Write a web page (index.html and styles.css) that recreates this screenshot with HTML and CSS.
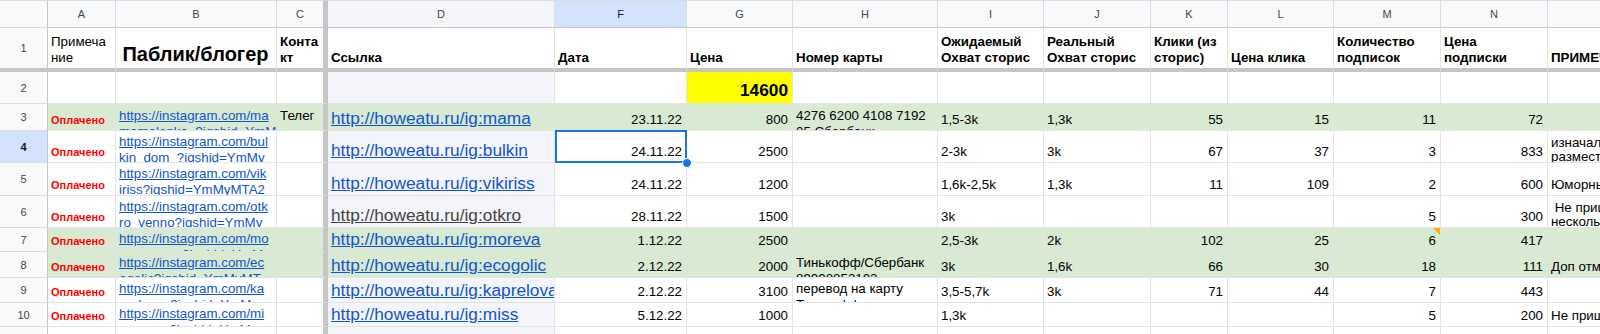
FILE: index.html
```html
<!DOCTYPE html>
<html>
<head>
  <title>Публикации</title>
  <link rel="stylesheet" href="styles.css">
</head>
<body>
  <div class="sheet">
    <div class="row head">
      <div class="rh corner"></div>
      <div class="cell a">A</div>
      <div class="cell b">B</div>
      <div class="cell c">C</div>
      <div class="cell d">D</div>
      <div class="cell f active">F</div>
      <div class="cell g">G</div>
      <div class="cell h">H</div>
      <div class="cell i">I</div>
      <div class="cell j">J</div>
      <div class="cell k">K</div>
      <div class="cell l">L</div>
      <div class="cell m">M</div>
      <div class="cell n">N</div>
      <div class="cell o"></div>
    </div>

    <div class="row row-1 titles">
      <div class="rh">1</div>
      <div class="cell a plain">Примеча<br>ние</div>
      <div class="cell b big">Паблик/блогер</div>
      <div class="cell c tight">Конта<br>кт</div>
      <div class="cell d">Ссылка</div>
      <div class="cell f">Дата</div>
      <div class="cell g">Цена</div>
      <div class="cell h">Номер карты</div>
      <div class="cell i">Ожидаемый<br>Охват сторис</div>
      <div class="cell j">Реальный<br>Охват сторис</div>
      <div class="cell k">Клики (из<br>сторис)</div>
      <div class="cell l">Цена клика</div>
      <div class="cell m">Количество<br>подписок</div>
      <div class="cell n">Цена<br>подписки</div>
      <div class="cell o">ПРИМЕЧАНИЕ</div>
    </div>

    <div class="row row-2">
      <div class="rh">2</div>
      <div class="cell a"></div>
      <div class="cell b"></div>
      <div class="cell c"></div>
      <div class="cell d"></div>
      <div class="cell f"></div>
      <div class="cell g num total">14600</div>
      <div class="cell h"></div>
      <div class="cell i"></div>
      <div class="cell j"></div>
      <div class="cell k"></div>
      <div class="cell l"></div>
      <div class="cell m"></div>
      <div class="cell n"></div>
      <div class="cell o"></div>
    </div>

    <div class="row row-3 green">
      <div class="rh">3</div>
      <div class="cell a status">Оплачено</div>
      <div class="cell b top low"><span class="ig">https://instagram.com/ma<br>mamalenka_?igshid=YmMy</span></div>
      <div class="cell c top low">Телег</div>
      <div class="cell d"><span class="site">http://howeatu.ru/ig:mama</span></div>
      <div class="cell f num">23.11.22</div>
      <div class="cell g num">800</div>
      <div class="cell h top low">4276 6200 4108 7192<br>05 Сбербанк</div>
      <div class="cell i">1,5-3k</div>
      <div class="cell j">1,3k</div>
      <div class="cell k num">55</div>
      <div class="cell l num">15</div>
      <div class="cell m num">11</div>
      <div class="cell n num">72</div>
      <div class="cell o"></div>
    </div>

    <div class="row row-4">
      <div class="rh active">4</div>
      <div class="cell a status">Оплачено</div>
      <div class="cell b top"><span class="ig">https://instagram.com/bul<br>kin_dom_?igshid=YmMy</span></div>
      <div class="cell c"></div>
      <div class="cell d"><span class="site">http://howeatu.ru/ig:bulkin</span></div>
      <div class="cell f num sel">24.11.22</div>
      <div class="cell g num">2500</div>
      <div class="cell h"></div>
      <div class="cell i">2-3k</div>
      <div class="cell j">3k</div>
      <div class="cell k num">67</div>
      <div class="cell l num">37</div>
      <div class="cell m num">3</div>
      <div class="cell n num">833</div>
      <div class="cell o top note-text">изначально<br>разместить</div>
    </div>

    <div class="row row-5">
      <div class="rh">5</div>
      <div class="cell a status">Оплачено</div>
      <div class="cell b top"><span class="ig">https://instagram.com/vik<br>iriss?igshid=YmMyMTA2</span></div>
      <div class="cell c"></div>
      <div class="cell d"><span class="site">http://howeatu.ru/ig:vikiriss</span></div>
      <div class="cell f num">24.11.22</div>
      <div class="cell g num">1200</div>
      <div class="cell h"></div>
      <div class="cell i">1,6k-2,5k</div>
      <div class="cell j">1,3k</div>
      <div class="cell k num">11</div>
      <div class="cell l num">109</div>
      <div class="cell m num">2</div>
      <div class="cell n num">600</div>
      <div class="cell o">Юморные сторис</div>
    </div>

    <div class="row row-6">
      <div class="rh">6</div>
      <div class="cell a status">Оплачено</div>
      <div class="cell b top"><span class="ig">https://instagram.com/otk<br>ro_venno?igshid=YmMy</span></div>
      <div class="cell c"></div>
      <div class="cell d"><span class="site grey">http://howeatu.ru/ig:otkro</span></div>
      <div class="cell f num">28.11.22</div>
      <div class="cell g num">1500</div>
      <div class="cell h"></div>
      <div class="cell i">3k</div>
      <div class="cell j"></div>
      <div class="cell k num"></div>
      <div class="cell l num"></div>
      <div class="cell m num">5</div>
      <div class="cell n num">300</div>
      <div class="cell o top note-text">&nbsp;Не пришла<br>несколько</div>
    </div>

    <div class="row row-7 green">
      <div class="rh">7</div>
      <div class="cell a status">Оплачено</div>
      <div class="cell b top"><span class="ig">https://instagram.com/mo<br>reva_anna?igshid=YmMy</span></div>
      <div class="cell c"></div>
      <div class="cell d"><span class="site">http://howeatu.ru/ig:moreva</span></div>
      <div class="cell f num">1.12.22</div>
      <div class="cell g num">2500</div>
      <div class="cell h"></div>
      <div class="cell i">2,5-3k</div>
      <div class="cell j">2k</div>
      <div class="cell k num">102</div>
      <div class="cell l num">25</div>
      <div class="cell m num comment">6</div>
      <div class="cell n num">417</div>
      <div class="cell o"></div>
    </div>

    <div class="row row-8 green">
      <div class="rh">8</div>
      <div class="cell a status">Оплачено</div>
      <div class="cell b top"><span class="ig">https://instagram.com/ec<br>ogolic?igshid=YmMyMT</span></div>
      <div class="cell c"></div>
      <div class="cell d"><span class="site">http://howeatu.ru/ig:ecogolic</span></div>
      <div class="cell f num">2.12.22</div>
      <div class="cell g num">2000</div>
      <div class="cell h top">Тинькофф/Сбербанк<br>89998853102</div>
      <div class="cell i">3k</div>
      <div class="cell j">1,6k</div>
      <div class="cell k num">66</div>
      <div class="cell l num">30</div>
      <div class="cell m num">18</div>
      <div class="cell n num">111</div>
      <div class="cell o">Доп отметка</div>
    </div>

    <div class="row row-9">
      <div class="rh">9</div>
      <div class="cell a status">Оплачено</div>
      <div class="cell b top"><span class="ig">https://instagram.com/ka<br>prelova_?igshid=YmMy</span></div>
      <div class="cell c"></div>
      <div class="cell d"><span class="site">http://howeatu.ru/ig:kaprelova</span></div>
      <div class="cell f num">2.12.22</div>
      <div class="cell g num">3100</div>
      <div class="cell h top">перевод на карту<br>Тинькофф</div>
      <div class="cell i">3,5-5,7k</div>
      <div class="cell j">3k</div>
      <div class="cell k num">71</div>
      <div class="cell l num">44</div>
      <div class="cell m num">7</div>
      <div class="cell n num">443</div>
      <div class="cell o"></div>
    </div>

    <div class="row row-10">
      <div class="rh">10</div>
      <div class="cell a status">Оплачено</div>
      <div class="cell b top"><span class="ig">https://instagram.com/mi<br>ss_anna?igshid=YmMy</span></div>
      <div class="cell c"></div>
      <div class="cell d"><span class="site">http://howeatu.ru/ig:miss</span></div>
      <div class="cell f num">5.12.22</div>
      <div class="cell g num">1000</div>
      <div class="cell h"></div>
      <div class="cell i">1,3k</div>
      <div class="cell j"></div>
      <div class="cell k num"></div>
      <div class="cell l num"></div>
      <div class="cell m num">5</div>
      <div class="cell n num">200</div>
      <div class="cell o">Не пришла</div>
    </div>

    <div class="row row-11">
      <div class="rh"></div>
      <div class="cell a"></div>
      <div class="cell b"></div>
      <div class="cell c"></div>
      <div class="cell d"></div>
      <div class="cell f"></div>
      <div class="cell g"></div>
      <div class="cell h"></div>
      <div class="cell i"></div>
      <div class="cell j"></div>
      <div class="cell k"></div>
      <div class="cell l"></div>
      <div class="cell m"></div>
      <div class="cell n"></div>
      <div class="cell o"></div>
    </div>
  </div>
</body>
</html>
```

FILE: styles.css
```css
body {
  margin: 0;
  width: 1600px;
  height: 334px;
  overflow: hidden;
  background: #fff;
  font-family: 'Liberation Sans', Arial, sans-serif;
  font-size: 13.33px;
  color: #000;
}

.sheet {
  border-top: 1px solid #dadce0;
  display: flex;
  flex-direction: column;
}

.row {
  display: grid;
  grid-template-columns: 48px 68px 161px 51px 227px 132px 106px 145px 106px 107px 77px 106px 107px 107px 200px;
}

.rh,
.cell {
  box-sizing: border-box;
  display: flex;
  align-items: flex-end;
  overflow: hidden;
  white-space: nowrap;
  border-right: 1px solid #e2e3e3;
  border-bottom: 1px solid #e2e3e3;
  line-height: 16px;
}

.cell {
  padding: 0 4px 2px 3px;
}

.rh {
  justify-content: center;
  align-items: center;
  background: #f8f9fa;
  border-right-color: #c4c7c5;
  border-bottom-color: #dadce0;
  color: #444746;
  font-size: 11px;
}

.rh.active {
  background: #d3e3fd;
  color: #0b1a35;
  font-weight: bold;
}

/* column letters */
.head {
  height: 27px;
}

.head .cell {
  justify-content: center;
  align-items: center;
  padding: 0;
  background: #f8f9fa;
  border-right-color: #dadce0;
  border-bottom-color: #c4c7c5;
  color: #444746;
  font-size: 11px;
}

.head .cell.active {
  background: #d3e3fd;
  color: #0b1a35;
}

/* frozen panes */
.cell.c {
  border-right: 5px solid #c6c6c6;
}

.head .cell.c {
  border-right: 5px solid #c6c6c6;
}

.row-1 .cell,
.row-1 .rh {
  border-bottom: 4px solid #c6c6c6;
}

.row-1 { height: 44px; }
.row-2 { height: 32px; }
.row-3 { height: 27px; }
.row-4 { height: 32px; }
.row-5 { height: 33px; }
.row-6 { height: 32px; }
.row-7 { height: 24px; }
.row-8 { height: 26px; }
.row-9 { height: 25px; }
.row-10 { height: 24px; }
.row-11 { height: 30px; }

.cell.d {
  background: #f4f4fb;
}

.row-1 .cell.d {
  background: #fff;
}

.row.green .cell {
  background: #d9ead3;
}

/* header titles */
.titles .cell {
  font-weight: bold;
}

.titles .cell.plain {
  font-weight: normal;
}

.titles .cell.big {
  justify-content: center;
  font-size: 20px;
  line-height: 23px;
  padding-bottom: 2px;
}

.titles .cell.tight {
  padding-right: 1px;
}

.cell.top {
  align-items: flex-start;
  padding-top: 3px;
}

.cell.top.low {
  padding-top: 4px;
}

.cell.note-text {
  padding-top: 5px;
  line-height: 14px;
}

.cell.num {
  justify-content: flex-end;
}

.cell.total {
  background: #ffff00;
  font-weight: bold;
  font-size: 17.3px;
  line-height: 20px;
  padding-bottom: 3px;
}

.cell.status {
  color: #ff0000;
  font-weight: bold;
  font-size: 11px;
  line-height: 15px;
}

.ig {
  color: #1155cc;
  text-decoration: underline;
}

.site {
  color: #1155cc;
  text-decoration: underline;
  font-size: 17.3px;
  line-height: 20px;
}

.site.grey {
  color: #434343;
}

/* selected cell with fill handle */
.cell.sel {
  position: relative;
  overflow: visible;
}

.cell.sel::after {
  content: "";
  position: absolute;
  top: -1px;
  left: 0;
  right: -1px;
  bottom: -1px;
  border: 2px solid #1a73e8;
  z-index: 2;
}

.cell.sel::before {
  content: "";
  position: absolute;
  right: -6px;
  bottom: -6px;
  width: 8px;
  height: 8px;
  border-radius: 50%;
  background: #1a73e8;
  border: 1px solid #fff;
  z-index: 3;
}

/* comment marker */
.cell.comment {
  position: relative;
}

.cell.comment::after {
  content: "";
  position: absolute;
  top: 0;
  right: 0;
  border-top: 7px solid #f9ab00;
  border-left: 7px solid transparent;
}
```
